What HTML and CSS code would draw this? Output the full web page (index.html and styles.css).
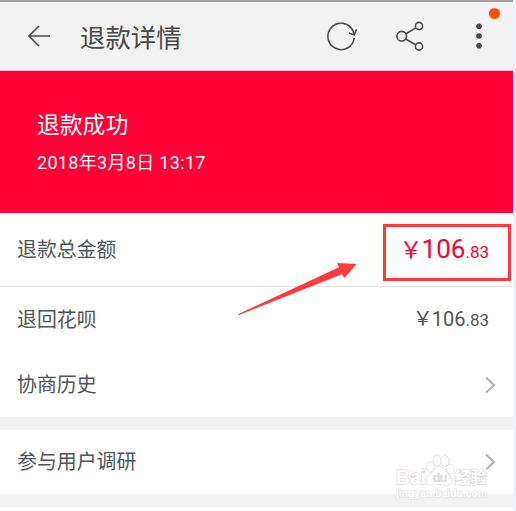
FILE: index.html
```html
<!DOCTYPE html>
<html lang="zh-CN">
<head>
<meta charset="utf-8">
<title>退款详情</title>
<link rel="stylesheet" href="styles.css">
</head>
<body>
<main class="screen">
  <header class="bar">
    <svg class="back" width="24" height="24" viewBox="0 0 24 24"><path d="M12 2 2 12l10 10M2 12h21"/></svg>
    <h1>退款详情</h1>
    <svg class="refresh" width="34" height="34" viewBox="0 0 34 34"><path d="M30.200 19A13.200 13.200 0 1 1 28.900 11.500L30.300 15.500M24.800 14l5.500 2 2.200-5.700"/></svg>
    <svg class="share" width="30" height="32" viewBox="0 0 30 32"><circle cx="6.700" cy="16.200" r="4.800"/><circle cx="24" cy="6" r="3.600"/><circle cx="24" cy="26.500" r="3.600"/><path d="m11 13.700 9.800-5.800M10.700 19l10 5.800"/></svg>
    <svg class="more" width="6" height="26" viewBox="0 0 6 26"><circle cx="3" cy="3.300" r="2.800"/><circle cx="3" cy="13" r="2.800"/><circle cx="3" cy="22.700" r="2.800"/></svg>
    <i class="dot"></i>
  </header>
  <section class="status">
    <h2>退款成功</h2>
    <p>2018年3月8日 13:17</p>
  </section>
  <section class="row total"><span>退款总金额</span><span class="price big"><i>￥</i><b>106</b><small>.83</small></span></section>
  <section class="row refund"><span>退回花呗</span><span class="price"><i>￥</i><b>106</b><small>.83</small></span></section>
  <section class="row history"><span>协商历史</span><svg class="chev" width="12" height="18" viewBox="0 0 12 18"><path d="m2 1.500 8 7.500-8 7.500"/></svg></section>
  <section class="row survey"><span>参与用户调研</span><svg class="chev" width="12" height="18" viewBox="0 0 12 18"><path d="m2 1.500 8 7.500-8 7.500"/></svg></section>
  <div class="rest"></div>
</main>
<svg class="marks" width="516" height="511" viewBox="0 0 516 511">
  <rect x="384.500" y="225.500" width="125" height="54" fill="none" stroke="#fb3c3c" stroke-width="3"/>
  <path d="M238 314.200 339 267.200 337 263 356.500 264 344.500 278 342 274.300 239 315Z" fill="#fb3c3c"/>
  <g class="watermark">
    <ellipse cx="430.500" cy="467" rx="3.500" ry="4.800"/><ellipse cx="437" cy="460.500" rx="3.700" ry="5"/><ellipse cx="445" cy="461" rx="3.700" ry="5"/><ellipse cx="450.500" cy="469" rx="3.500" ry="4.600"/>
    <path d="M439.500 467c5 0 7 5 10.500 9 3.500 5 1.500 9-3.500 9-3 0-4-1-7-1s-5 1-8 1c-5 0-6-5-2.500-9 4-4 6-9 10.500-9Z"/>
    <text x="396" y="484" font-size="21" textLength="30" lengthAdjust="spacingAndGlyphs">Bai</text>
    <text class="du" x="432.500" y="482" font-size="13" textLength="15">du</text>
    <text x="454.500" y="483" font-size="16" textLength="32">经验</text>
    <text class="url" x="396" y="496.500" font-size="10.500" textLength="91" lengthAdjust="spacingAndGlyphs">jingyan.baidu.com</text>
  </g>
</svg>
</body>
</html>
```
FILE: styles.css
```css
* { box-sizing: border-box; }
body { margin: 0; width: 516px; height: 511px; overflow: hidden; position: relative; background: #eff1fa; font-family: Roboto, "Noto Sans CJK SC", sans-serif; color: #50545a; }
.screen { width: 513px; height: 511px; display: flex; flex-direction: column; background: #f2f2f2; }
h1, h2, p { margin: 0; font-weight: 400; }
.bar { position: relative; height: 71px; flex: none; border-top: 2px solid #a2a2a2; border-bottom: 1px solid #f5b8c2; display: flex; align-items: center; padding-left: 27px; }
svg { fill: none; stroke: #4a4a4a; stroke-width: 1.6; flex: none; }
h1 { font-size: 25.4px; line-height: 36px; color: #484848; margin-left: 29px; width: 102px; padding-top: 3px; white-space: nowrap; }
.refresh { margin-left: 142px; }
.share { margin-left: 37px; }
.more { margin-left: 51px; fill: #484848; stroke: none; }
.dot { position: absolute; left: 489px; top: 6px; width: 11px; height: 11px; border-radius: 50%; background: #ff5000; }
.status { height: 142px; flex: none; background: #ff0036; color: #fff; padding: 38px 37px 0; }
h2 { font-size: 22.8px; line-height: 34px; }
.status p { font-size: 18px; line-height: 26px; margin-top: 7px; letter-spacing: 0.32px; }
.row { display: flex; align-items: center; justify-content: space-between; background: #fff; padding: 0 17px; font-size: 19.9px; line-height: 30px; flex: none; }
.row > span:first-child { padding-top: 2px; }
.total { height: 74px; border-bottom: 1px solid #e3e3e3; }
.refund { height: 65px; }
.history { height: 65px; }
.survey { height: 64px; margin-top: 13px; }
.rest { height: 4px; margin-top: 13px; background: #fff; }
.price { display: flex; align-items: baseline; margin-right: 7px; color: #50545a; }
.price i { font-style: normal; font-size: 20px; margin-right: -1px; font-family: "Noto Sans CJK SC", sans-serif; line-height: 20px; }
.price b { font-weight: 400; font-size: 20px; }
.price small { font-size: 17px; }
.big { color: #ff0036; padding-top: 2px; }
.big i { font-size: 23px; margin-right: -1px; }
.big b { font-size: 26px; }
.chev { stroke: #b0b0b0; stroke-width: 2; }
.marks { position: absolute; left: 0; top: 0; stroke: none; }
.watermark { fill: #fff; stroke: #dcdcdc; stroke-width: 1.4; paint-order: stroke; font-family: "Liberation Sans", "Noto Sans CJK SC", sans-serif; font-weight: 700; }
.watermark .du { fill: #d9d9d9; stroke: none; }
.watermark .url { stroke: #e2e2e2; stroke-width: 1.2; }
```
